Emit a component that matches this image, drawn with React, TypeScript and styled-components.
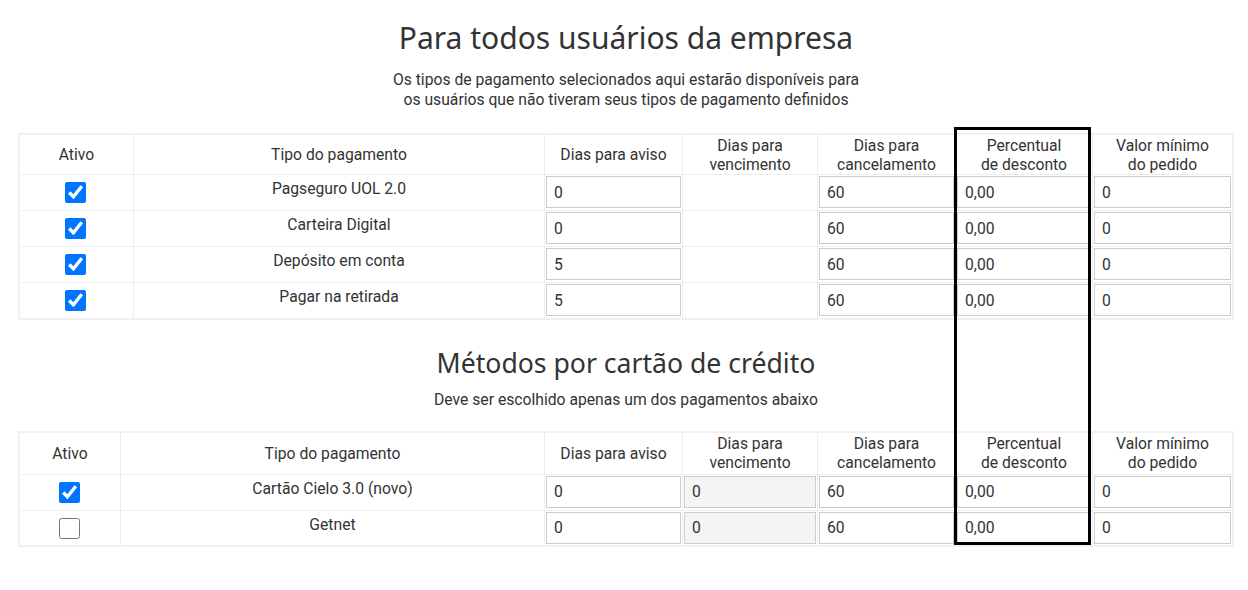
import React from 'react'
import styled, { createGlobalStyle } from 'styled-components'

const GlobalStyle = createGlobalStyle`
  html, body {
    margin: 0;
    padding: 0;
    background: #fff;
  }
  body {
    font-family: Roboto, "Liberation Sans", sans-serif;
    color: #333;
  }
`

const Page = styled.div`
  position: relative;
  padding: 18px 14px 0 18px;
`

const Title = styled.h2<{ $size: number }>`
  margin: 0;
  font-family: "Noto Sans", "Open Sans", sans-serif;
  font-weight: 400;
  font-size: ${(p) => p.$size}px;
  line-height: 40px;
  text-align: center;
  color: #333;
`

const Subtitle = styled.p<{ $gap: number }>`
  margin: ${(p) => p.$gap}px 0 0;
  font-size: 15.7px;
  line-height: 20px;
  text-align: center;
  color: #333;
`

const Section = styled.section<{ $top: number }>`
  margin-top: ${(p) => p.$top}px;
`

const Table = styled.table<{ $gap: number }>`
  width: 100%;
  margin-top: ${(p) => p.$gap}px;
  border-collapse: collapse;
  border: 2px solid #f0f0f0;
  font-size: 15.7px;
  color: #333;

  th,
  td {
    border: 1px solid #eee;
  }
`

const Th = styled.th<{ $w?: number; $h: number }>`
  width: ${(p) => (p.$w ? `${p.$w}px` : 'auto')};
  height: ${(p) => p.$h}px;
  padding: 0 4px;
  font-weight: 400;
  line-height: 19px;
  text-align: center;
  vertical-align: middle;
`

const Td = styled.td<{ $center?: boolean }>`
  box-sizing: border-box;
  height: 36px;
  padding: 1px;
  text-align: ${(p) => (p.$center ? 'center' : 'left')};
  vertical-align: top;
`

const Label = styled.div`
  padding-top: 3px;
  line-height: 20px;
  text-align: center;
`

const Check = styled.input`
  width: 21px;
  height: 21px;
  margin: 6px 0 0 -2px;
  accent-color: #0075ff;
`

const Field = styled.input<{ $muted?: boolean }>`
  box-sizing: border-box;
  display: block;
  width: 100%;
  height: 32px;
  padding: 0 7px;
  border: 1px solid #ccc;
  border-radius: 0;
  background: ${(p) => (p.$muted ? '#f4f4f4' : '#fff')};
  font-family: Roboto, "Liberation Sans", sans-serif;
  font-size: 15.7px;
  color: #333;
`

const Highlight = styled.div`
  position: absolute;
  left: 954px;
  top: 127px;
  width: 131px;
  height: 412px;
  border: 3px solid #000;
  pointer-events: none;
`

type Row = {
  name: string
  active: boolean
  aviso: string
  venc?: string
  cancel: string
}

const general: Row[] = [
  { name: 'Pagseguro UOL 2.0', active: true, aviso: '0', cancel: '60' },
  { name: 'Carteira Digital', active: true, aviso: '0', cancel: '60' },
  { name: 'Depósito em conta', active: true, aviso: '5', cancel: '60' },
  { name: 'Pagar na retirada', active: true, aviso: '5', cancel: '60' },
]

const cards: Row[] = [
  { name: 'Cartão Cielo 3.0 (novo)', active: true, aviso: '0', venc: '0', cancel: '60' },
  { name: 'Getnet', active: false, aviso: '0', venc: '0', cancel: '60' },
]

type TableProps = { rows: Row[]; ativoWidth: number; gap: number; headH: number }

const PaymentTable = ({ rows, ativoWidth, gap, headH }: TableProps) => (
  <Table $gap={gap}>
    <thead>
      <tr>
        <Th $h={headH} $w={ativoWidth}>Ativo</Th>
        <Th $h={headH}>Tipo do pagamento</Th>
        <Th $h={headH} $w={129}>Dias para aviso</Th>
        <Th $h={headH} $w={126}>
          Dias para
          <br />
          vencimento
        </Th>
        <Th $h={headH} $w={129}>
          Dias para
          <br />
          cancelamento
        </Th>
        <Th $h={headH} $w={128}>
          Percentual
          <br />
          de desconto
        </Th>
        <Th $h={headH} $w={131}>
          Valor mínimo
          <br />
          do pedido
        </Th>
      </tr>
    </thead>
    <tbody>
      {rows.map((r) => (
        <tr key={r.name}>
          <Td $center>
            <Check type="checkbox" defaultChecked={r.active} />
          </Td>
          <Td>
            <Label>{r.name}</Label>
          </Td>
          <Td>
            <Field defaultValue={r.aviso} />
          </Td>
          <Td>{r.venc !== undefined && <Field $muted readOnly defaultValue={r.venc} />}</Td>
          <Td>
            <Field defaultValue={r.cancel} />
          </Td>
          <Td>
            <Field defaultValue="0,00" />
          </Td>
          <Td>
            <Field defaultValue="0" />
          </Td>
        </tr>
      ))}
    </tbody>
  </Table>
)

export default function App() {
  return (
    <>
      <GlobalStyle />
      <Page>
        <Section $top={0}>
          <Title $size={30}>Para todos usuários da empresa</Title>
          <Subtitle $gap={12}>
            Os tipos de pagamento selecionados aqui estarão disponíveis para
            <br />
            os usuários que não tiveram seus tipos de pagamento definidos
          </Subtitle>
          <PaymentTable rows={general} ativoWidth={105} gap={23} headH={39} />
        </Section>
        <Section $top={23}>
          <Title $size={26.6}>Métodos por cartão de crédito</Title>
          <Subtitle $gap={7}>Deve ser escolhido apenas um dos pagamentos abaixo</Subtitle>
          <PaymentTable rows={cards} ativoWidth={92} gap={21} headH={41} />
        </Section>
        <Highlight />
      </Page>
    </>
  )
}
